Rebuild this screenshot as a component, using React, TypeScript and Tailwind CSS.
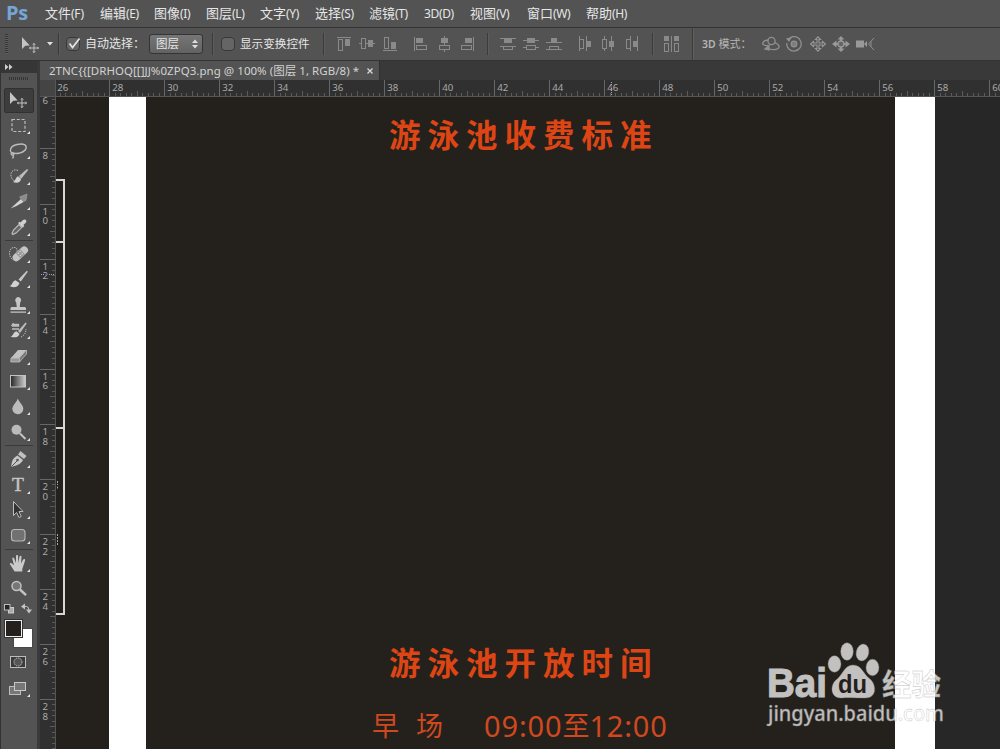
import React from "react";

type MenuEntry = { label: string; key: string; width: string };

const menus: MenuEntry[] = [
  { label: "文件", key: "(F)", width: "w-[55px]" },
  { label: "编辑", key: "(E)", width: "w-[54px]" },
  { label: "图像", key: "(I)", width: "w-[52px]" },
  { label: "图层", key: "(L)", width: "w-[54px]" },
  { label: "文字", key: "(Y)", width: "w-[55px]" },
  { label: "选择", key: "(S)", width: "w-[54px]" },
  { label: "滤镜", key: "(T)", width: "w-[55px]" },
  { label: "", key: "3D(D)", width: "w-[46px]" },
  { label: "视图", key: "(V)", width: "w-[57px]" },
  { label: "窗口", key: "(W)", width: "w-[59px]" },
  { label: "帮助", key: "(H)", width: "w-[60px]" },
];

const Menu = ({ label, key2, width }: { label: string; key2: string; width: string }) => (
  <div className={`flex shrink-0 items-baseline whitespace-nowrap ${width}`}>
    <span className="text-[13px]">{label}</span>
    <span className="text-[12px] tracking-[-0.35px]">{key2}</span>
  </div>
);

const Sep = ({ className = "" }: { className?: string }) => (
  <div className={`h-[22px] w-[2px] shrink-0 border-l border-[#3b3b3b] bg-[#5c5c5c] ${className}`} />
);

const MoveShape = () => (
  <g>
    <path d="M4 5V17l3.300-3.200 4.400-.3z" fill="#c4c4c4" />
    <path d="M16 11.500v9M11.500 16h9M14.700 12.700 16 11.400l1.300 1.300M14.700 19.300 16 20.600l1.300-1.300M12.700 14.700 11.400 16l1.300 1.300M19.300 14.700l1.300 1.300-1.300 1.300" fill="none" stroke="#c4c4c4" strokeWidth="1" />
  </g>
);

const alignIcons: { gap: string; node: React.ReactNode }[] = [
  { gap: "ml-0", node: <><path d="M0 1.5h14" /><rect x="1.5" y="3.5" width="4" height="11" /><rect className="fill-[#8a8a8a]" x="8.5" y="3.5" width="4" height="6" /></> },
  { gap: "ml-[6px]", node: <><path d="M0 7.5h2M7 7.5h2M14 7.5h2" /><rect x="2.5" y="2.5" width="4" height="10" /><rect className="fill-[#8a8a8a]" x="9.5" y="4.5" width="4" height="6" /></> },
  { gap: "ml-2", node: <><path d="M0 14.5h14" /><rect x="1.5" y="1.5" width="4" height="11" /><rect className="fill-[#8a8a8a]" x="8.5" y="6.5" width="4" height="6" /></> },
  { gap: "ml-[14px]", node: <><path d="M1.5 1v14" /><rect className="fill-[#8a8a8a]" x="3.5" y="2.5" width="6" height="4" /><rect x="3.5" y="9.5" width="10" height="4" /></> },
  { gap: "ml-2", node: <><path d="M7.5 0v2M7.5 7v2M7.5 14v2" /><rect className="fill-[#8a8a8a]" x="4.5" y="2.5" width="6" height="4" /><rect x="2.5" y="9.5" width="10" height="4" /></> },
  { gap: "ml-[7px]", node: <><path d="M13.500 1v14" /><rect className="fill-[#8a8a8a]" x="5.5" y="2.5" width="6" height="4" /><rect x="1.5" y="9.5" width="10" height="4" /></> },
];

const distIcons: { gap: string; node: React.ReactNode }[] = [
  { gap: "ml-0", node: <><path d="M0 2.5h16M0 10.5h16" /><rect className="fill-[#8a8a8a]" x="4.5" y="3.5" width="7" height="3" /><rect x="3.5" y="10.5" width="9" height="3" /></> },
  { gap: "ml-[7px]", node: <><path d="M0 4.5h16M0 11.5h16" /><rect className="fill-[#8a8a8a]" x="4.5" y="2.5" width="7" height="4" /><rect className="fill-[#535353]" x="3.5" y="9.5" width="9" height="4" /></> },
  { gap: "ml-[7px]", node: <><path d="M0 6.5h16M0 13.5h16" /><rect className="fill-[#8a8a8a]" x="5.5" y="2.5" width="5" height="4" /><rect x="3.5" y="10.5" width="9" height="3" /></> },
  { gap: "ml-[15px]", node: <><path d="M2.5 0v15M9.5 0v15" /><rect x="2.5" y="3.5" width="4" height="9" /><rect className="fill-[#8a8a8a]" x="9.5" y="5.5" width="4" height="5" /></> },
  { gap: "ml-[7px]", node: <><path d="M4.500 0v15M11.500 0v15" /><rect className="fill-[#535353]" x="2.5" y="3.5" width="4" height="9" /><rect className="fill-[#8a8a8a]" x="9.5" y="5.5" width="4" height="5" /></> },
  { gap: "ml-[8px]", node: <><path d="M6.500 0v15M13.500 0v15" /><rect x="2.5" y="3.5" width="4" height="9" /><rect className="fill-[#8a8a8a]" x="9.5" y="5.5" width="4" height="5" /></> },
];

const BarIcon = ({ gap, children }: { gap: string; children: React.ReactNode }) => (
  <svg className={`shrink-0 ${gap}`} width="16" height="16" viewBox="0 0 16 16" fill="none" stroke="#8a8a8a">
    {children}
  </svg>
);

const OptionsBar = () => (
  <div className="flex h-[34px] w-full shrink-0 items-center border-t border-b border-t-[#333] border-b-[#333] bg-[#535353]">
    <div className="ml-[5px] h-[20px] w-[3px] bg-[repeating-linear-gradient(#353535_0_1px,#5d5d5d_1px_2px)]" />
    <svg className="ml-[10px]" width="22" height="24" viewBox="0 0 22 24">
      <MoveShape />
    </svg>
    <svg className="ml-[7px]" width="6" height="4" viewBox="0 0 6 4"><path d="M0 0h6L3 3.5z" fill="#e0e0e0" /></svg>
    <Sep className="ml-[5px]" />
    <div className="ml-[6px] flex h-[14px] w-[14px] items-center justify-center rounded-sm border border-[#383838] bg-[#656565]">
      <svg className="shrink-0 overflow-visible" width="13" height="13" viewBox="0 0 13 13"><path d="m2.500 5.500 3 4L12.500.5" fill="none" stroke="#e2e2e2" strokeWidth="1.800" /></svg>
    </div>
    <span className="ml-[5px] w-[64px] text-[12px] whitespace-nowrap">自动选择：</span>
    <div className="flex h-[20px] w-[54px] items-center justify-between rounded-[3px] border border-[#343434] bg-linear-to-b from-[#767676] to-[#626262] pr-[4px] pl-[6px] text-[11.5px]">
      图层
      <svg width="6" height="10" viewBox="0 0 6 10"><path d="M0 4h6L3 .5zM0 6h6L3 9.5z" fill="#dedede" /></svg>
    </div>
    <Sep className="ml-[9px]" />
    <div className="ml-[7px] h-[14px] w-[14px] rounded-sm border border-[#383838] bg-[#656565]" />
    <span className="ml-[5px] w-[71px] text-[11.600px] whitespace-nowrap">显示变换控件</span>
    <Sep className="ml-[12px]" />
    <div className="ml-[12px] flex">{alignIcons.map((i, n) => <BarIcon key={n} gap={i.gap}>{i.node}</BarIcon>)}</div>
    <Sep className="ml-[11px]" />
    <div className="ml-[11px] flex">{distIcons.map((i, n) => <BarIcon key={n} gap={i.gap}>{i.node}</BarIcon>)}</div>
    <Sep className="ml-[12px]" />
    <BarIcon gap="ml-[10px]">
      <rect className="fill-[#8a8a8a]" x=".5" y=".5" width="4" height="4" /><rect className="fill-[#8a8a8a]" x="10.5" y=".5" width="4" height="4" />
      <path d="M7.500 0v16" /><rect x=".5" y="7.5" width="4" height="8" /><rect x="10.5" y="7.5" width="4" height="8" />
    </BarIcon>
    <div className="ml-[12px] h-[32px] w-[2px] border-l border-[#3b3b3b] bg-[#606060]" />
    <span className="ml-[8px] w-[59.500px] text-[11px] whitespace-nowrap text-[#b4b4b4]"><b className="text-[10.500px] font-semibold">3D</b> 模式：</span>
    <div className="flex gap-[5.500px]">
      <svg width="18" height="16" viewBox="0 0 18 16" fill="none" stroke="#909090" strokeWidth="1.300">
        <path d="M6 9.500C2 10 0 8 1 6.500S4 4 6.500 4M5 12c5 2.500 12 2 12-1.200 0-2-2.500-3.500-4.500-4" /><circle cx="9.500" cy="5" r="3.600" /><path d="M7 9.500v4.500L3 13z" fill="#909090" />
      </svg>
      <svg width="18" height="16" viewBox="0 0 18 16" fill="none" stroke="#909090" strokeWidth="1.300">
        <path d="M5 1.800A7.200 7.200 0 1 1 1.800 7" /><circle cx="9" cy="8" r="2.800" fill="#7c7c7c" /><path d="M1 2.500 7 1 4 6z" fill="#909090" stroke="none" />
      </svg>
      <svg width="18" height="16" viewBox="0 0 18 16" fill="none" stroke="#999" strokeWidth="1.100">
        <path d="M8 7V3.500H6.500L9 .8l2.500 2.700H10V7h3.500V5.500L16.500 8l-3 2.500V9H10v3.500h1.500L9 15.200l-2.500-2.700H8V9H4.500v1.500L1.500 8l3-2.500V7z" />
      </svg>
      <svg width="18" height="16" viewBox="0 0 18 16" fill="#999">
        <path d="m9 0 3.500 3.500h-7zM9 16l-3.500-3.500h7zM0 8l4.500-3.500v7zM18 8l-4.500-3.500v7z" /><path d="M3 7h12v2H3zM8 3h2v10H8z" /><circle cx="9" cy="8" r="3" fill="#666" stroke="#999" strokeWidth="1.300" />
      </svg>
      <svg width="19" height="16" viewBox="0 0 19 16" fill="#999">
        <path d="M0 4.500h8v7H0zM8 8l3-3v6z" /><path d="m18 2-5.500 6 5.500 6M15 5.500v5" fill="none" stroke="#909090" />
      </svg>
    </div>
  </div>
);

const G = "#bdbdbd";

const toolGroups: { icon: React.ReactNode; plain?: boolean }[][] = [
  [
    { plain: true, icon: <MoveShape /> },
    { icon: <rect x="6" y="6.500" width="13" height="12" fill="none" stroke={G} strokeWidth="1.200" strokeDasharray="3 1.800" /> },
    { icon: <path d="M8 16C2 14 4 8 11 6.500s10 .5 9 4-8 6-12 4.500c-2-.8-3.500.3-2.500 1.500s3 .5 2.300-1M7 17.500c.8 1 .5 2-.8 2.700" fill="none" stroke={G} strokeWidth="1.300" /> },
    { icon: <><path d="M12 6.500C8 4.500 4 8 5 12s3 5.500 6 5" fill="none" stroke={G} strokeDasharray="1.500 1" /><path d="m13 12 8-7 1.200 1-7 8.700z" fill={G} /><path d="M7 18c2.500-1 2.500-4.500 5-5.800l3 2.500c-.2 3.800-4 4.800-8 3.300z" fill="#d0d0d0" /></> },
    { icon: <><path d="M4.500 19.500 15 10l2.500 3-7 4z" fill="#d2d2d2" /><path d="m13.500 8 7.500-3-1 6.500-2.500 1z" fill="#8c8c8c" stroke="#a5a5a5" strokeWidth=".6" /></> },
    { icon: <><path d="M7 19.500 6 18.500l1.500-3.500 5.500-5.500 2.800 2.800-5.500 5.500z" fill="#666" stroke={G} strokeWidth="1.200" /><path d="m12 8 1.500-1.200 1 .8L17 5c2-1.800 4.500.7 2.800 2.700L17.300 10l1 1-1.500 1.500z" fill="#d0d0d0" /></> },
  ],
  [
    { icon: <><path d="M8 18c-5-1-6-10-2-12 3-1.500 6 0 5 4" fill="none" stroke={G} strokeDasharray="1.400 1" /><g transform="rotate(-43 14.500 12)"><rect x="5.500" y="8" width="18" height="7.500" rx="3.500" fill="#c4c4c4" /><rect x="11.500" y="8" width="6" height="7.500" fill="#999" /><path d="M12.500 10h1.500m1 0h1.500m-4 3h1.500m1 0h1.500" stroke="#ddd" /></g></> },
    { icon: <><path d="m12.500 12.500 8.300-8.700 1 .9-7 9.800z" fill="#c8c8c8" /><path d="M3.500 19c3-.5 2.500-5 6-5.800l4 2.700c-1 4-6 5.500-10 3.100z" fill="#d2d2d2" /></> },
    { icon: <path d="M12 4a3.200 3.200 0 0 1 2.200 5.500L13.700 14H19l1 1v2H4.500v-2l1-1h5.300l-.6-4.500A3.200 3.200 0 0 1 12 4M4.500 18.500H20v1.300H4.500z" fill="#c6c6c6" /> },
    { icon: <><path d="M6 8h6.500V6.500H7M5.500 8l2-3M6 11h7" fill="none" stroke={G} strokeWidth="1.300" /><path d="m12 13 7.500-8.500 1.200 1-6.700 9.500z" fill={G} /><path d="M4.500 18.500c2.800-.3 2.500-4.500 6-5.300l3 2.500c-.5 3.500-5 4.600-9 2.800z" fill="#d0d0d0" /><path d="M15 19c4-2 5-5 5-8" fill="none" stroke={G} strokeDasharray="1.300 1" /></> },
    { icon: <><path d="M12 6h8.500l-7 8H5z" fill="#c2c2c2" /><path d="M5 14h8.500v4H4.800z" fill="#999" stroke="#c0c0c0" strokeWidth=".8" /><path d="m13.500 14 7-8v4l-7 8z" fill="#777" stroke="#bbb" strokeWidth=".8" /></> },
    { icon: <><defs><linearGradient id="toolGradient"><stop stopColor="#252525" /><stop offset="1" stopColor="#d0d0d0" /></linearGradient></defs><rect x="4.500" y="6.500" width="15" height="11.500" fill="url(#toolGradient)" stroke="#c2c2c2" /></> },
    { icon: <path d="M11.800 4.500c1 3.500 5.500 6.500 5.500 10a5.500 5.500 0 0 1-11 .5c0-3.500 4.500-7 5.500-10.500z" fill="#bcbcbc" /> },
    { icon: <><circle cx="10.500" cy="9.800" r="5" fill="#bababa" /><path d="m14 13.500 5.500 5.500" stroke="#c6c6c6" strokeWidth="2" /></> },
  ],
  [
    { icon: <><path d="M5 20c1-4.500.5-8.500 6.500-11.500l5.500 4.500C15 17.500 9.500 18.800 5 20z" fill="#c6c6c6" /><path d="m5.500 19.500 5.500-5.500" stroke="#555" /><circle cx="11.500" cy="13" r="1.300" fill="#555" /><path d="m12 7.500 2.500-3.500 6 5-2.500 3z" fill="#c0c0c0" /></> },
    { icon: <text x="6" y="18" fontSize="19.500" fontFamily="Liberation Serif, serif" fill="#c6c6c6" stroke="#c6c6c6" strokeWidth=".4">T</text> },
    { icon: <path d="M7.500 3.500V17.500l3.200-3 2.200 5 2.300-1-2.200-5h4z" fill="#333" stroke={G} /> },
    { icon: <rect x="5.500" y="6.500" width="13.500" height="11.500" rx="3" fill="#717171" stroke="#b8b8b8" strokeWidth="1.100" /> },
  ],
  [
    { icon: <path d="M8.500 20.500 4 13.300c-.5-1.500 1-1.700 2-.7l2 2L6.300 7.500c0-1.500 1.500-1.500 1.900 0l1.800 4.500V5c0-1.500 2.100-1.500 2.100 0v7l1.500-6.500c.4-1.300 2.100-1 1.900.4L15 12.500l2.200-3.900c.8-1.300 2.300-.6 1.900.8L16.300 18v2.500z" fill="#cacaca" /> },
    { plain: true, icon: <><circle cx="10.500" cy="10" r="4.500" fill="#777" stroke="#c2c2c2" strokeWidth="1.500" /><path d="m14 13.500 6 5.700" stroke="#c2c2c2" strokeWidth="2.500" /></> },
  ],
];

const ToolPanel = () => (
  <div className="flex w-[40px] shrink-0 flex-col border-r-[3px] border-l border-r-[#3a3a3a] border-l-[#333] bg-[#535353]">
    <div className="flex h-[12px] shrink-0 items-center bg-[#363636] pl-[4px]">
      <svg width="8" height="6" viewBox="0 0 8 6" fill="#cfcfcf"><path d="m0 0 3.500 3L0 6zM4 0l3.500 3L4 6z" /></svg>
    </div>
    <div className="flex h-[14.500px] shrink-0 justify-center pt-[4px]">
      <div className="h-[3px] w-[20px] bg-[repeating-linear-gradient(90deg,#333_0_1px,#555_1px_2px)]" />
    </div>
    {toolGroups.map((group, g) => (
      <React.Fragment key={g}>
        {g > 0 && <div className="mx-[4px] my-[0.5px] h-px shrink-0 bg-[#3a3a3a]" />}
        {group.map((tool, t) => (
          <div
            key={t}
            className={
              g === 0 && t === 0
                ? "mx-[3px] flex h-[25.4px] shrink-0 items-start rounded-[2px] border border-[#313131] bg-[#3d3d3d] pl-px"
                : "flex h-[25.4px] shrink-0 items-center pl-[5px]"
            }
          >
            <svg className={g === 0 && t === 0 ? "-mt-[2px] shrink-0" : "shrink-0"} width="25" height="25" viewBox="0 0 25 25">
              {tool.icon}
              {!tool.plain && <path d="M24 18v3h-3z" fill="#e4e4e4" />}
            </svg>
          </div>
        ))}
      </React.Fragment>
    ))}
    <svg className="mt-px shrink-0" width="36" height="96" viewBox="1 602 36 96">
      <rect x="8.500" y="607.500" width="5" height="5.500" fill="#aaa" stroke="#ccc" />
      <rect x="4.500" y="604.500" width="5.500" height="5.500" fill="#252525" stroke="#bbb" />
      <path d="M21 606.500l4-3v6zM26 609.500h6l-3 4z" fill="#c4c4c4" />
      <path d="M25 606.500h1.500q2.500 0 2.500 4" fill="none" stroke="#c4c4c4" />
      <rect x="13.500" y="628.500" width="19" height="19" fill="#fff" stroke="#484848" />
      <rect x="4.500" y="619.500" width="18" height="18" fill="#24201d" stroke="#333" />
      <rect x="5.500" y="620.500" width="16" height="16" fill="#24201d" stroke="#eee" />
      <rect x="10.500" y="656.500" width="15" height="11" fill="#3b3b3b" stroke="#bcbcbc" />
      <circle cx="18" cy="662" r="4" fill="#555" stroke="#bcbcbc" strokeDasharray="1.500 .8" />
      <rect x="9.500" y="686.500" width="11" height="8" fill="#777" stroke="#bdbdbd" />
      <rect x="14.500" y="682.500" width="11" height="8" fill="#777" stroke="#c8c8c8" />
      <path d="M30 694v3h-3z" fill="#e4e4e4" />
    </svg>
  </div>
);

const HorizontalRuler = () => (
  <svg className="block shrink-0" width="944" height="17" viewBox="56 80 944 17" fontFamily="Noto Sans, sans-serif" fontSize="9.700">
    <rect x="56" y="80" width="944" height="17" fill="#303030" />
    {Array.from({ length: 173 }, (_, n) => {
      const x = Math.floor(54.5 + n * 5.5) + 0.5;
      const top = n % 10 === 0 ? 80 : n % 5 === 0 ? 91 : 93;
      return <path key={n} d={`M${x} ${top}V96`} stroke={n % 10 === 0 ? "#666" : "#5b5b5b"} />;
    })}
    {Array.from({ length: 18 }, (_, n) => (
      <text key={n} x={57.3 + n * 55} y="90.500" fill="#a9a9a9">{26 + n * 2}</text>
    ))}
    <path d="M56 96.500h944" stroke="#565656" />
    <path d="M611.500 82v14" stroke="#ababab" strokeDasharray="1 1" />
    <path d="M611.500 85v3" stroke="#b04040" />
  </svg>
);

const VerticalRuler = () => (
  <svg className="block w-[16px] shrink-0" width="16" height="652" viewBox="40 97 16 652" fontFamily="Noto Sans, sans-serif" fontSize="9.700">
    <rect x="40" y="97" width="16" height="652" fill="#303030" />
    {Array.from({ length: 120 }, (_, n) => {
      const y = Math.floor(93.9 + n * 5.505) + 0.5;
      const left = n % 10 === 0 ? 40 : n % 5 === 0 ? 50 : 52;
      return <path key={n} d={`M${left} ${y}H55`} stroke={n % 10 === 0 ? "#666" : "#5b5b5b"} />;
    })}
    {Array.from({ length: 12 }, (_, n) => (
      <text key={n} fill="#a9a9a9">
        {String(6 + n * 2).split("").map((d, k) => (
          <tspan key={k} x="42.500" y={104.4 + n * 55.05 + k * 9.8}>{d}</tspan>
        ))}
      </text>
    ))}
    <path d="M55.500 97v652" stroke="#565656" />
    <path d="M41 274.500h14" stroke="#ababab" strokeDasharray="1 1" />
    <path d="M45 274.500h3" stroke="#5050c0" />
  </svg>
);

const Watermark = () => (
  <svg className="absolute top-[636px] left-[760px]" width="190" height="94" viewBox="760 636 190 94">
    <g opacity="0.72" fill="#fff" stroke="#a8a8a8" strokeWidth=".4">
      <text x="767" y="697" fontFamily="Liberation Sans, sans-serif" fontWeight="700" fontSize="40.500" textLength="60" lengthAdjust="spacingAndGlyphs" stroke="#fff" strokeWidth="1">Bai</text>
      <ellipse cx="834.500" cy="664" rx="6.500" ry="8.300" />
      <ellipse cx="847" cy="651.500" rx="6.300" ry="8.800" />
      <ellipse cx="862.500" cy="652.500" rx="6.300" ry="8.500" transform="rotate(12 862.500 652.500)" />
      <ellipse cx="872.500" cy="667.500" rx="6.500" ry="8.300" />
      <path d="M853 665c9 0 10 9 17 14 6 5 8 19-5 19-6 0-18-.8-24 0-11 0-11-13-5-18 7-5 8-15 17-15z" />
      <text x="882" y="695" fontFamily="Noto Sans CJK SC, sans-serif" fontWeight="700" fontSize="30" textLength="59" lengthAdjust="spacingAndGlyphs">经验</text>
      <text x="768" y="721" fontFamily="Noto Sans, sans-serif" fontWeight="500" fontSize="21" textLength="176" lengthAdjust="spacingAndGlyphs">jingyan.baidu.com</text>
    </g>
    <text x="838" y="692.500" fontFamily="Liberation Sans, sans-serif" fontWeight="700" fontSize="25" textLength="29" lengthAdjust="spacingAndGlyphs" fill="#24201c">du</text>
  </svg>
);

const Document = () => (
  <div className="relative flex min-w-0 flex-1 bg-[#272727]">
    <div className="w-[53px] shrink-0 bg-[#24211d] pt-[82px]">
      <div className="h-[436px] w-[9px] border-t-2 border-r-2 border-b-2 border-[#d6d6d6]">
        <div className="mt-[60px] h-[188px] border-t-2 border-b-2 border-[#d6d6d6]" />
      </div>
    </div>
    <svg className="absolute top-[383px] left-0" width="3" height="70" viewBox="0 0 3 70" stroke="#aaa">
      <path d="M1.500 1v4M1.500 6.500v2M1.500 54v12" strokeDasharray="2 1" />
    </svg>
    <div className="w-[37px] shrink-0 bg-white" />
    <div className="flex w-[749px] shrink-0 flex-col bg-[#24211d] font-['Noto_Sans_CJK_SC',sans-serif] whitespace-nowrap text-[#de4514]">
      <div className="mt-[12px] ml-[243px] h-[48px] text-[31.500px] leading-[48px] font-bold tracking-[7px]">游泳池收费标准</div>
      <div className="mt-[480px] ml-[243px] h-[48px] text-[31.500px] leading-[48px] font-bold tracking-[7px]">游泳池开放时间</div>
      <div className="mt-[18px] ml-[226px] flex h-[46px] font-['Noto_Sans','Noto_Sans_CJK_SC',sans-serif] text-[27px] leading-[46px] text-[#d0481e]">
        <span className="w-[44px]">早</span>
        <span className="w-[68px]">场</span>
        <span className="text-[29px] tracking-[0.850px]">09:00</span>
        <span>至</span>
        <span className="text-[29px] tracking-[0.850px]">12:00</span>
      </div>
    </div>
    <div className="w-[40px] shrink-0 bg-white" />
  </div>
);

export default function App() {
  return (
    <div className="relative flex h-[749px] w-[1000px] flex-col overflow-hidden bg-[#535353] font-['Noto_Sans','Noto_Sans_CJK_SC',sans-serif] text-[#e6e6e6]">
      <div className="flex h-[27px] shrink-0 items-center">
        <div className="w-[45px] shrink-0 pb-[2px] pl-[6px] font-['Open_Sans',sans-serif] text-[20px] leading-[26px] font-bold tracking-[-0.400px] text-[#76a5d8]">Ps</div>
        {menus.map((m) => <Menu key={m.key} label={m.label} key2={m.key} width={m.width} />)}
      </div>
      <OptionsBar />
      <div className="flex min-h-0 flex-1">
        <ToolPanel />
        <div className="flex min-w-0 flex-1 flex-col">
          <div className="flex h-[19px] shrink-0 bg-[#393939]">
            <div className="flex h-[19px] w-[340px] shrink-0 items-center border-r border-[#303030] bg-[#535353] pl-[9px] text-[11.500px] whitespace-nowrap text-[#d2d2d2]">
              <span className="w-[318px] tracking-[0.040px]">2TNC{"{{["}DRHOQ[[]JJ%0ZPQ3.png @ 100% (图层 1, RGB/8) *</span>
              <svg width="6" height="6" viewBox="0 0 6 6"><path d="m.5.5 5 5m0-5-5 5" stroke="#d8d8d8" strokeWidth="1.300" /></svg>
            </div>
          </div>
          <div className="flex h-[17px] shrink-0">
            <div className="w-[16px] shrink-0 border-r border-b border-[#565656] bg-[#444]" />
            <HorizontalRuler />
          </div>
          <div className="flex min-h-0 flex-1">
            <VerticalRuler />
            <Document />
          </div>
        </div>
      </div>
      <Watermark />
    </div>
  );
}
